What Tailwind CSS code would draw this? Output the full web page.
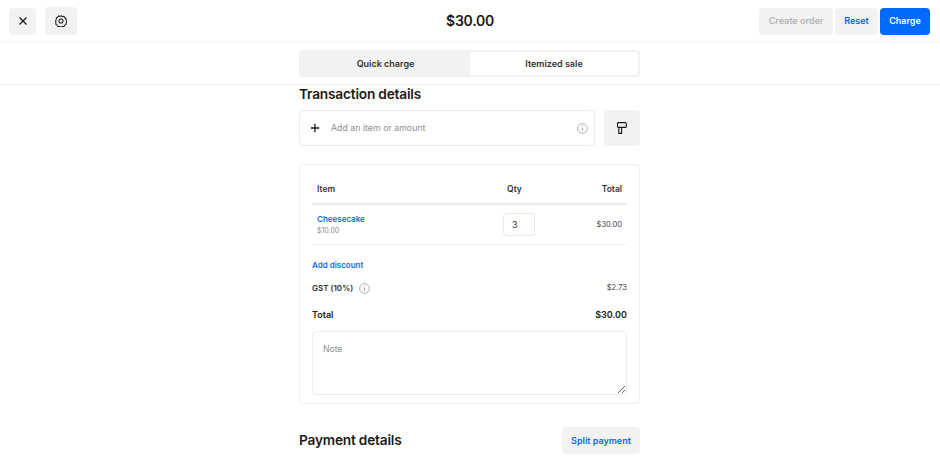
<!DOCTYPE html>
<html lang="en">
<head>
<meta charset="utf-8">
<script src="https://cdn.jsdelivr.net/npm/@tailwindcss/browser@4"></script>
<title>Itemized sale</title>
</head>
<body class="bg-white font-['Inter',sans-serif] text-[#1a1a1a] h-[456px] overflow-hidden">
  <header class="h-[43px] border-b border-[#f3f3f3] flex items-center justify-between pl-[9px] pr-[10px] relative">
    <div class="flex items-center gap-[9px]">
      <button class="w-[27px] h-[27px] rounded-[4px] bg-[#f2f2f2] flex items-center justify-center">
        <svg width="10" height="10" viewBox="0 0 10 10" fill="none" stroke="#1a1a1a" stroke-width="1.3"><path d="M1.500 1.500l7 7M8.500 1.500l-7 7"/></svg>
      </button>
      <button class="w-[32px] h-[28px] rounded-[4px] bg-[#f2f2f2] flex items-center justify-center">
        <svg width="12" height="12" viewBox="0 0 13 13" fill="none" stroke="#1a1a1a" stroke-width="1.100"><path d="M6.500.8 8 1.600l1.700-.1.9 1.500 1.500.9-.1 1.700.8 1.400-.8 1.400.1 1.700-1.500.9-.9 1.500-1.700-.1-1.500.8-1.500-.8-1.700.1-.9-1.500-1.500-.9.1-1.700L.6 6.500l.8-1.400-.1-1.700 1.500-.9.9-1.500L5 1.600z"/><circle cx="6.500" cy="6.500" r="2.200"/></svg>
      </button>
    </div>
    <div class="absolute left-0 right-0 top-0 h-[41px] flex items-center justify-center pointer-events-none">
      <span class="text-[14px] font-semibold tracking-[-0.25px]">$30.00</span>
    </div>
    <div class="flex items-center gap-[2px]">
      <button class="w-[74px] h-[27px] rounded-[4px] bg-[#f2f2f2] text-[9px] font-semibold text-[#b3b3b3]">Create order</button>
      <button class="w-[43px] h-[27px] rounded-[4px] bg-[#f2f2f2] text-[9px] font-semibold text-[#0f64d8]">Reset</button>
      <button class="w-[50px] h-[27px] rounded-[4px] bg-[#006aff] text-[9px] font-semibold text-white">Charge</button>
    </div>
  </header>

  <div class="h-[42px] border-b border-[#f3f3f3] pt-[7px]">
    <div class="w-[341px] h-[27px] ml-[299px] rounded-[3px] bg-[#f2f2f2] p-[2px] flex">
      <div class="flex-1 flex items-center justify-center text-[9px] font-semibold text-[#333]">Quick charge</div>
      <div class="w-[168px] bg-white rounded-[2px] flex items-center justify-center text-[9px] font-semibold text-[#333]">Itemized sale</div>
    </div>
  </div>

  <main class="w-[341px] ml-[299px]">
    <h2 class="text-[13.700px] leading-[18px] font-semibold tracking-[-0.2px]">Transaction details</h2>
    <div class="flex gap-[9px] mt-[7px]">
      <div class="w-[296px] h-[36px] border border-[#ececec] rounded-[4px] flex items-center pl-[10px] pr-[6px]">
        <svg width="10" height="10" viewBox="0 0 10 10" fill="none" stroke="#1a1a1a" stroke-width="1.300"><path d="M5 .8v8.400M.8 5h8.400"/></svg>
        <span class="ml-[11px] text-[8.800px] text-[#8f8f8f]">Add an item or amount</span>
        <svg class="ml-auto" width="11" height="11" viewBox="0 0 11 11" fill="none" stroke="#a3a3a3" stroke-width=".9"><circle cx="5.500" cy="5.500" r="4.800"/><path d="M5.500 4.800v3.200M5.500 2.700v1"/></svg>
      </div>
      <button class="w-[36px] h-[36px] rounded-[4px] bg-[#f2f2f2] flex items-center justify-center">
        <svg width="10" height="12" viewBox="0 0 10 12" fill="none" stroke="#1a1a1a" stroke-width="1.100"><path d="M1.500.6h6.800q1 0 1 1v2.800q0 1-1 1H1.500q-1 0-1-1V1.600q0-1 1-1zM1.800 5.400v6h2.800v-6"/></svg>
      </button>
    </div>

    <section class="mt-[18px] h-[240px] border border-[#efefef] rounded-[4px] px-[12px] pt-[13px]">
      <div class="h-[27px] border-b-2 border-[#ececec] flex items-start pt-[6px] text-[8.500px] leading-[11px] font-semibold text-[#333]">
        <span class="w-[181px] pl-[5px]">Item</span>
        <span class="w-[43px] text-center">Qty</span>
        <span class="ml-auto pr-[5px]">Total</span>
      </div>
      <div class="h-[40px] border-b border-[#f3f3f3] flex items-center">
        <div class="w-[191px] pl-[5px]">
          <div class="text-[8px] leading-[12px] font-semibold text-[#0f6ae8]">Cheesecake</div>
          <div class="text-[7px] leading-[10px] mt-[1px] text-[#8f8f8f]">$10.00</div>
        </div>
        <div class="w-[32px] h-[23px] border border-[#e8e8e8] rounded-[4px] flex items-center pl-[8px] text-[9px] text-[#333]">3</div>
        <span class="ml-auto pr-[5px] text-[7.500px] text-[#444]">$30.00</span>
      </div>
      <div class="mt-[14px] text-[8px] leading-[12px] font-semibold text-[#0f6ae8]">Add discount</div>
      <div class="mt-[11px] h-[12px] flex items-center text-[8px] font-semibold text-[#333]">
        <span>GST (10%)</span>
        <svg class="ml-[6px]" width="11" height="11" viewBox="0 0 11 11" fill="none" stroke="#a3a3a3" stroke-width=".9"><circle cx="5.500" cy="5.500" r="4.800"/><path d="M5.500 4.800v3.200M5.500 2.700v1"/></svg>
        <span class="ml-auto font-normal text-[7.500px] text-[#444]">$2.73</span>
      </div>
      <div class="mt-[15px] h-[12px] flex items-center justify-between text-[9px] font-semibold text-[#222]">
        <span>Total</span>
        <span>$30.00</span>
      </div>
      <div class="relative mt-[10px]">
        <label for="note" class="absolute left-[11px] top-[12px] text-[8.600px] leading-[12px] text-[#8f8f8f]">Note</label>
        <textarea id="note" class="block w-[315px] h-[64px] border border-[#ececec] rounded-[4px] resize-y outline-none"></textarea>
      </div>
    </section>

    <div class="mt-[23px] flex items-center justify-between">
      <h2 class="text-[13.700px] font-semibold tracking-[-0.2px]">Payment details</h2>
      <button class="w-[78px] h-[27px] rounded-[4px] bg-[#f2f2f2] text-[9px] font-semibold text-[#0f6ae8]">Split payment</button>
    </div>
  </main>
</body>
</html>
